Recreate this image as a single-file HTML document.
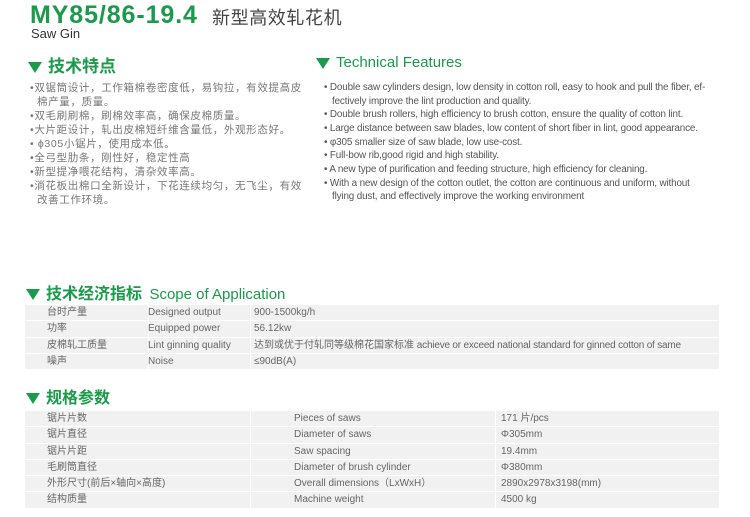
<!DOCTYPE html>
<html><head><meta charset="utf-8"><style>
*{margin:0;padding:0;box-sizing:border-box}
body{width:750px;height:517px;background:#fff;position:relative;overflow:hidden;font-family:"Liberation Sans","Noto Sans CJK SC",sans-serif;color:#555}
.a{position:absolute;white-space:nowrap}
.g{color:#1a9a4a}
.tri{display:inline-block;width:0;height:0;border-left:7px solid transparent;border-right:7px solid transparent;border-top:11px solid #1a9a4a;vertical-align:middle;margin-right:6px}
.cn li,.en li{list-style:none;position:absolute;white-space:nowrap}
.cn{font-size:10.5px;letter-spacing:0.65px;color:#777}
.en{font-size:9.9px;letter-spacing:-0.15px;color:#555}
.tbl{position:absolute;left:25px;width:694px;background:#f1f1f1}
.row{position:relative;height:16.3px;border-bottom:1px solid #fff;font-size:10px;color:#666;line-height:16px}
.row span{position:absolute;white-space:nowrap}
.vl{position:absolute;top:0;bottom:0;width:1px;background:#fff}
</style></head><body>
<div class="a g" style="left:30px;top:1px;font-size:25px;font-weight:bold;letter-spacing:0.9px">MY85/86-19.4</div>
<div class="a" style="left:212px;top:4px;font-size:18px;color:#444;letter-spacing:0.6px">新型高效轧花机</div>
<div class="a" style="left:31px;top:26px;font-size:13px;color:#333">Saw Gin</div>

<div class="a g" style="left:28px;top:52px;font-size:17px;font-weight:bold"><span class="tri"></span>技术特点</div>
<div class="a g" style="left:316px;top:54px;font-size:15px"><span class="tri"></span>Technical Features</div>

<ul class="cn">
<li style="left:30px;top:80px">•双锯筒设计，工作箱棉卷密度低，易钩拉，有效提高皮</li>
<li style="left:37px;top:94px">棉产量，质量。</li>
<li style="left:30px;top:108px">•双毛刷刷棉，刷棉效率高，确保皮棉质量。</li>
<li style="left:30px;top:122px">•大片距设计，轧出皮棉短纤维含量低，外观形态好。</li>
<li style="left:30px;top:136px">• ϕ305小锯片，使用成本低。</li>
<li style="left:30px;top:150px">•全弓型肋条，刚性好，稳定性高</li>
<li style="left:30px;top:164px">•新型提净喂花结构，清杂效率高。</li>
<li style="left:30px;top:178px">•淌花板出棉口全新设计，下花连续均匀，无飞尘，有效</li>
<li style="left:37px;top:192px">改善工作环境。</li>
</ul>
<ul class="en">
<li style="left:324px;top:82px">• Double saw cylinders design, low density in cotton roll, easy to hook and pull the fiber, ef-</li>
<li style="left:332px;top:96px">fectively improve the lint production and quality.</li>
<li style="left:324px;top:109px">• Double brush rollers, high efficiency to brush cotton, ensure the quality of cotton lint.</li>
<li style="left:324px;top:123px">• Large distance between saw blades, low content of short fiber in lint, good appearance.</li>
<li style="left:324px;top:137px">• φ305 smaller size of saw blade, low use-cost.</li>
<li style="left:324px;top:150px">• Full-bow rib,good rigid and high stability.</li>
<li style="left:324px;top:164px">• A new type of purification and feeding structure, high efficiency for cleaning.</li>
<li style="left:324px;top:178px">• With a new design of the cotton outlet, the cotton are continuous and uniform, without</li>
<li style="left:332px;top:191px">flying dust, and effectively improve the working environment</li>
</ul>

<div class="a g" style="left:26px;top:280px;font-size:16px;font-weight:bold"><span class="tri"></span>技术经济指标 <span style="font-weight:normal;font-size:15px;margin-left:3px">Scope of Application</span></div>
<div class="tbl" style="top:305px">
<div class="vl" style="left:123px"></div><div class="vl" style="left:225px"></div>
<div class="row"><span style="left:22px">台时产量</span><span style="left:123px">Designed output</span><span style="left:229px">900-1500kg/h</span></div>
<div class="row"><span style="left:22px">功率</span><span style="left:123px">Equipped power</span><span style="left:229px">56.12kw</span></div>
<div class="row"><span style="left:22px">皮棉轧工质量</span><span style="left:123px">Lint ginning quality</span><span style="left:229px">达到或优于付轧同等级棉花国家标准 <span style="position:static;letter-spacing:-0.2px">achieve or exceed national standard for ginned cotton of same</span></span></div>
<div class="row"><span style="left:22px">噪声</span><span style="left:123px">Noise</span><span style="left:229px">≤90dB(A)</span></div>
</div>

<div class="a g" style="left:26px;top:384px;font-size:16px;font-weight:bold"><span class="tri"></span>规格参数</div>
<div class="tbl" style="top:411px">
<div class="vl" style="left:225px"></div><div class="vl" style="left:470px"></div>
<div class="row"><span style="left:22px">锯片片数</span><span style="left:269px">Pieces of saws</span><span style="left:476px">171 片/pcs</span></div>
<div class="row"><span style="left:22px">锯片直径</span><span style="left:269px">Diameter of saws</span><span style="left:476px">Φ305mm</span></div>
<div class="row"><span style="left:22px">锯片片距</span><span style="left:269px">Saw spacing</span><span style="left:476px">19.4mm</span></div>
<div class="row"><span style="left:22px">毛刷筒直径</span><span style="left:269px">Diameter of brush cylinder</span><span style="left:476px">Φ380mm</span></div>
<div class="row"><span style="left:22px">外形尺寸(前后×轴向×高度)</span><span style="left:269px">Overall dimensions（LxWxH）</span><span style="left:476px">2890x2978x3198(mm)</span></div>
<div class="row"><span style="left:22px">结构质量</span><span style="left:269px">Machine weight</span><span style="left:476px">4500 kg</span></div>
</div>
</body></html>
